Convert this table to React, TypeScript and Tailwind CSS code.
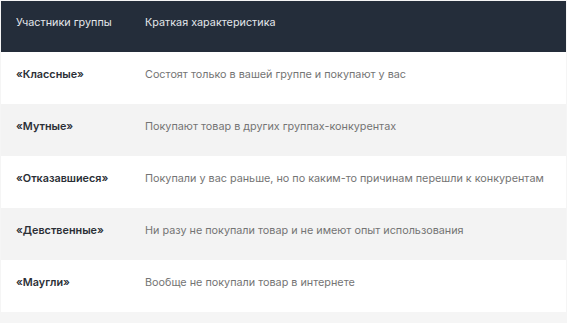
const rows = [
  ["«Классные»", "Состоят только в вашей группе и покупают у вас"],
  ["«Мутные»", "Покупают товар в других группах-конкурентах"],
  ["«Отказавшиеся»", "Покупали у вас раньше, но по каким-то причинам перешли к конкурентам"],
  ["«Девственные»", "Ни разу не покупали товар и не имеют опыт использования"],
  ["«Маугли»", "Вообще не покупали товар в интернете"],
];

export default function App() {
  return (
    <div className="w-[567px] h-[323px] bg-[#f5f5f5] pt-px pl-px pr-px font-['Inter',sans-serif]">
      <div className="bg-white">
        {/* Header */}
        <div className="grid grid-cols-[144px_1fr] h-[51px] items-center bg-[#242d3a] text-[10.8px] text-[#e3e6ea] pb-[6px]">
          <span className="pl-[15px]">Участники группы</span>
          <span>Краткая характеристика</span>
        </div>

        {rows.map(([name, desc], i) => (
          <div
            key={i}
            className={`grid grid-cols-[144px_1fr] h-[52px] items-center text-[10.8px] pb-[6px] ${
              i % 2 === 1 ? "bg-[#f3f3f3]" : "bg-white"
            }`}
          >
            <span className="pl-[15px] font-semibold text-[#2b2f36]">{name}</span>
            <span className="text-[#747474]">{desc}</span>
          </div>
        ))}
      </div>
    </div>
  );
}
